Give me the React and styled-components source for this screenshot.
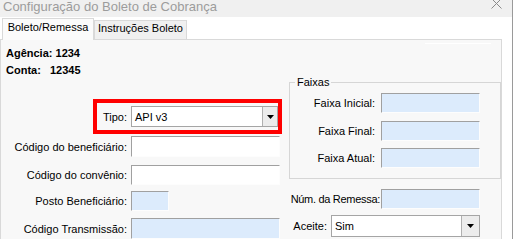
import React from "react";
import styled, { createGlobalStyle } from "styled-components";

const GlobalStyle = createGlobalStyle`
  html, body {
    margin: 0;
    padding: 0;
    background: #fff;
  }
  body {
    font-family: "Liberation Sans", Arial, sans-serif;
  }
`;

const Window = styled.div`
  width: 512px;
  height: 239px;
  overflow: hidden;
  background: #fff;
  border-right: 1px solid #9a9a9a;
  display: flex;
  flex-direction: column;
`;

const TitleBar = styled.div`
  flex: none;
  height: 17px;
  box-sizing: border-box;
  padding: 0 10px 0 3px;
  background: #f0f0f0;
  display: flex;
  justify-content: space-between;
  align-items: flex-start;
`;

const Title = styled.span`
  font-size: 13px;
  line-height: 14px;
  color: #9c9c9c;
  white-space: nowrap;
`;

const Close = styled.svg`
  margin-top: -2px;
  flex: none;
`;

const Body = styled.div`
  flex: 1;
  display: flex;
  flex-direction: column;
`;

const TabStrip = styled.div`
  flex: none;
  height: 23px;
  margin-bottom: -1px;
  padding-left: 2px;
  display: flex;
  align-items: flex-end;
  position: relative;
  z-index: 1;
`;

const Tab = styled.div`
  box-sizing: border-box;
  width: ${(p) => p.$w}px;
  height: ${(p) => (p.$active ? 22 : 20)}px;
  padding-top: ${(p) => (p.$active ? 2 : 1)}px;
  border: 1px solid #d9d9d9;
  border-bottom: ${(p) => (p.$active ? "none" : "1px solid #d9d9d9")};
  background: ${(p) => (p.$active ? "#fbfbfb" : "#f0f0f0")};
  font-size: 11px;
  line-height: 13px;
  color: #000;
  text-align: center;
  white-space: nowrap;
`;

const Panel = styled.div`
  flex: none;
  width: 502px;
  height: 220px;
  box-sizing: border-box;
  border: 1px solid #d9d9d9;
  background: #f8f8f8;
  display: flex;
`;

const LeftCol = styled.div`
  width: 288px;
  flex: none;
  display: flex;
  flex-direction: column;
`;

const RightCol = styled.div`
  flex: 1;
  display: flex;
  flex-direction: column;
`;

const Info = styled.div`
  padding: 5px 0 0 5px;
  font-size: 11px;
  font-weight: bold;
  line-height: 17px;
  color: #000;
  white-space: pre;
`;

const Highlight = styled.div`
  box-sizing: border-box;
  width: 189px;
  margin: 20px 0 0 92px;
  padding: 3px 0;
  border: 4px solid #ff0000;
  display: grid;
  grid-template-columns: 30px 147px;
  column-gap: 4px;
  align-items: center;
`;

const Row = styled.div`
  display: grid;
  grid-template-columns: ${(p) => p.$label}px auto;
  column-gap: ${(p) => p.$gap ?? 4}px;
  align-items: center;
  margin-top: ${(p) => p.$mt || 0}px;
`;

const Label = styled.label`
  font-size: 11px;
  color: #000;
  text-align: right;
  white-space: nowrap;
  letter-spacing: ${(p) => (p.$tight ? "-0.3px" : "normal")};
`;

const Field = styled.input`
  box-sizing: border-box;
  width: ${(p) => p.$w}px;
  height: ${(p) => p.$h || 20}px;
  margin: 0;
  padding: 0 3px;
  border: 1px solid;
  border-color: #a0a0a0 #fdfdfd #fdfdfd #a0a0a0;
  background: ${(p) => (p.$blue ? "#dcebfc" : "#fff")};
  font: 11px "Liberation Sans", Arial, sans-serif;
  outline: none;
`;

const Select = styled.div`
  box-sizing: border-box;
  width: ${(p) => p.$w}px;
  height: ${(p) => p.$h}px;
  border: 1px solid #a5a5a5;
  background: #fff;
  display: flex;
`;

const SelectValue = styled.span`
  flex: 1;
  padding-left: 3px;
  font-size: 11px;
  color: #000;
  display: flex;
  align-items: center;
`;

const DropButton = styled.span`
  width: ${(p) => p.$w || 14}px;
  flex: none;
  border-left: 1px solid #b0b0b0;
  background: #ececec;
  display: flex;
  align-items: center;
  justify-content: center;
`;

const Ghost = styled.div`
  width: 66px;
  height: 1px;
  margin: 3px 0 0 136px;
  background: #ffffff;
`;

const Group = styled.fieldset`
  box-sizing: border-box;
  width: 212px;
  margin: 32px 0 0 0;
  padding: 4px 0 10px 0;
  border: 1px solid #d6d6d6;
  min-width: 0;
`;

const Legend = styled.legend`
  margin-left: 5px;
  padding: 0 2px;
  font-size: 11px;
  line-height: 13px;
  color: #000;
`;

const Arrow = () => (
  <svg width="7" height="4" viewBox="0 0 7 4">
    <path d="M0 0H7L3.5 4Z" fill="#000" />
  </svg>
);

export default function App() {
  return (
    <>
      <GlobalStyle />
      <Window>
        <TitleBar>
          <Title>Configuração do Boleto de Cobrança</Title>
          <Close width="11" height="12" viewBox="0 0 11 12">
            <path d="M0.5 0.5L10.5 10.5M10.5 0.5L0.5 10.5" stroke="#8a8a8a" strokeWidth="1" fill="none" />
          </Close>
        </TitleBar>
        <Body>
          <TabStrip>
            <Tab $active $w={92}>Boleto/Remessa</Tab>
            <Tab $w={93}>Instruções Boleto</Tab>
          </TabStrip>
          <Panel>
            <LeftCol>
              <Info>
                {"Agência: 1234\nConta:   12345"}
              </Info>
              <Highlight>
                <Label>Tipo:</Label>
                <Select $w={147} $h={21}>
                  <SelectValue>API v3</SelectValue>
                  <DropButton>
                    <Arrow />
                  </DropButton>
                </Select>
              </Highlight>
              <Row $label={126} $mt={2}>
                <Label>Código do beneficiário:</Label>
                <Field $w={149} $h={21} readOnly />
              </Row>
              <Row $label={126} $mt={8}>
                <Label>Código do convênio:</Label>
                <Field $w={149} readOnly />
              </Row>
              <Row $label={126} $mt={6}>
                <Label>Posto Beneficiário:</Label>
                <Field $w={38} $blue readOnly />
              </Row>
              <Row $label={126} $mt={7}>
                <Label>Código Transmissão:</Label>
                <Field $w={149} $h={21} $blue readOnly />
              </Row>
            </LeftCol>
            <RightCol>
              <Ghost />
              <Group>
                <Legend>Faixas</Legend>
                <Row $label={85} $gap={6}>
                  <Label>Faixa Inicial:</Label>
                  <Field $w={99} $blue readOnly />
                </Row>
                <Row $label={85} $gap={6} $mt={8}>
                  <Label>Faixa Final:</Label>
                  <Field $w={99} $blue readOnly />
                </Row>
                <Row $label={85} $gap={6} $mt={7}>
                  <Label>Faixa Atual:</Label>
                  <Field $w={99} $blue readOnly />
                </Row>
              </Group>
              <Row $label={91} $gap={1} $mt={10}>
                <Label $tight>Núm. da Remessa:</Label>
                <Field $w={99} $blue readOnly />
              </Row>
              <Row $label={38} $gap={4} $mt={6}>
                <Label>Aceite:</Label>
                <Select $w={149} $h={22}>
                  <SelectValue>Sim</SelectValue>
                  <DropButton $w={17}>
                    <Arrow />
                  </DropButton>
                </Select>
              </Row>
            </RightCol>
          </Panel>
        </Body>
      </Window>
    </>
  );
}
